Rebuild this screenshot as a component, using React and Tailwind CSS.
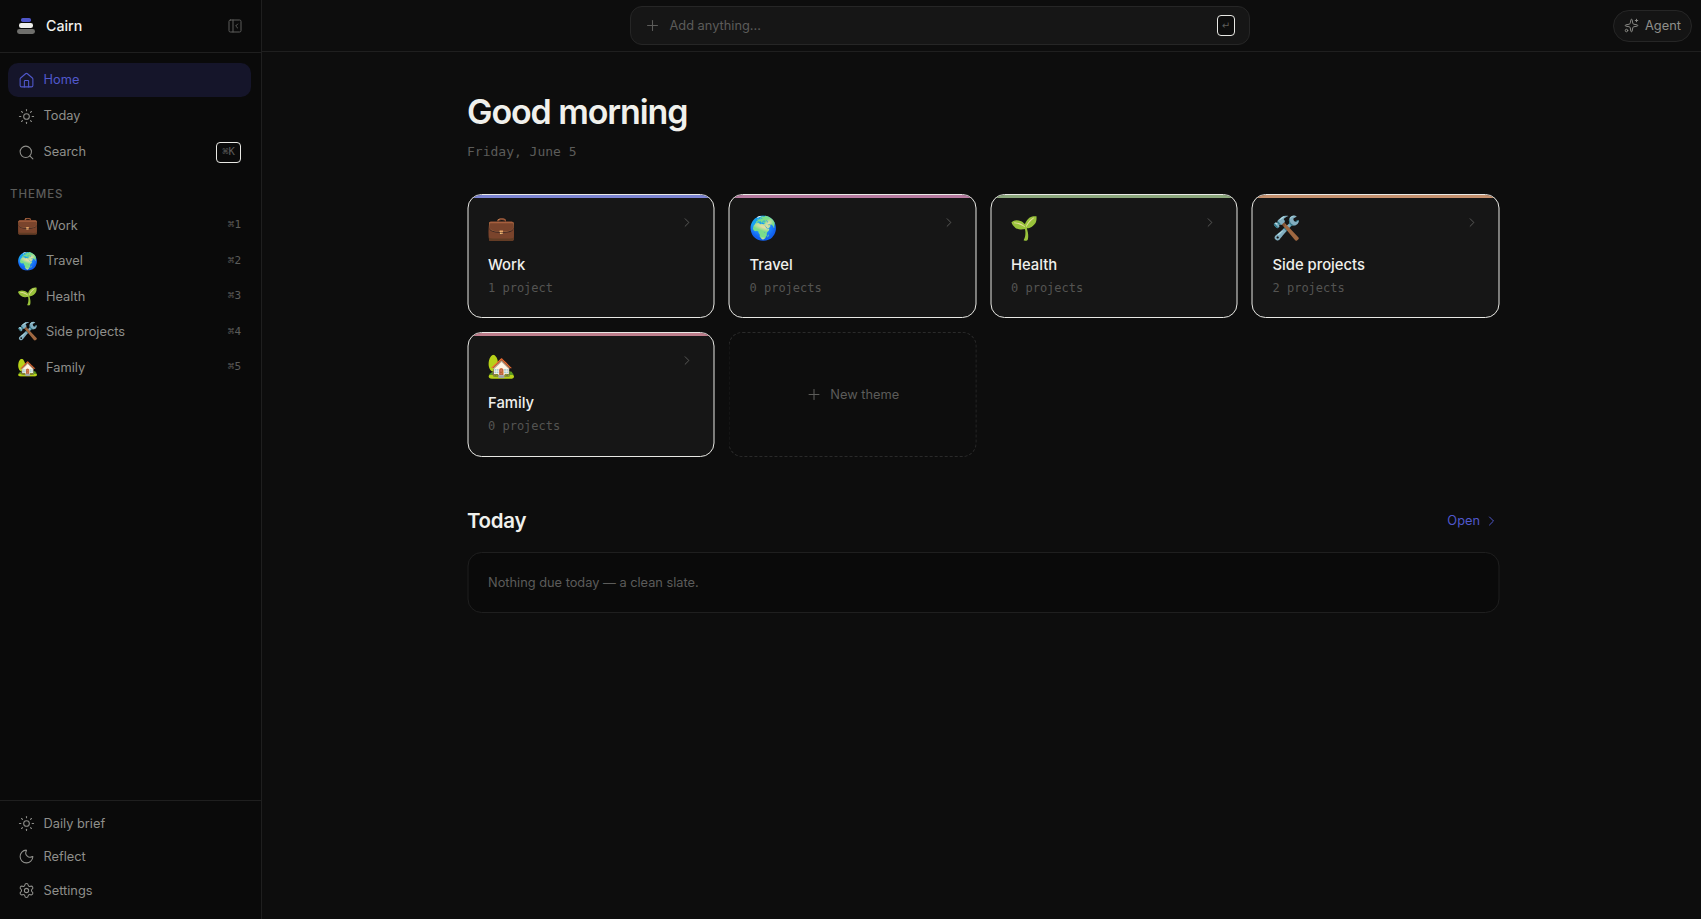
import React from 'react'
import {
  House,
  Sun,
  Search,
  PanelLeftClose,
  Moon,
  Settings,
  Plus,
  ChevronRight,
  Sparkles,
} from 'lucide-react'

const sans = { fontFamily: 'Inter, "Liberation Sans", sans-serif' }

const themes = [
  { name: 'Work', emoji: '💼', count: '1 project', key: '1', bar: 'bg-[#7b83d1]' },
  { name: 'Travel', emoji: '🌍', count: '0 projects', key: '2', bar: 'bg-[#b57a9f]' },
  { name: 'Health', emoji: '🌱', count: '0 projects', key: '3', bar: 'bg-[#8ba67c]' },
  { name: 'Side projects', emoji: '🛠️', count: '2 projects', key: '4', bar: 'bg-[#c4906e]' },
  { name: 'Family', emoji: '🏡', count: '0 projects', key: '5', bar: 'bg-[#bd7d8b]' },
]

function NavItem({ icon: Icon, label, active, right, className }) {
  return (
    <div
      className={`flex items-center rounded-[10px] pl-[9.5px] pr-[10px] text-[12.8px] ${
        active ? 'bg-[#15152a] text-[#5058cc]' : 'text-[#8f8f8b]'
      } ${className}`}
    >
      <Icon size={17} strokeWidth={1.5} className="mr-[9px]" />
      <span className="flex-1">{label}</span>
      {right}
    </div>
  )
}

function Logo() {
  return (
    <svg width="18" height="16" viewBox="0 0 18 16">
      <rect x="4" y="0" width="10" height="4" rx="1.8" fill="#4f56c9" />
      <rect x="2" y="5" width="14" height="5" rx="2.2" fill="#efefeb" />
      <rect x="0" y="11" width="18" height="5" rx="2.4" fill="#6f6f6c" />
    </svg>
  )
}

function ThemeCard({ theme }) {
  return (
    <div className="flex min-h-[124px] flex-col overflow-hidden rounded-[14px] border border-[#e8e8e4] bg-[#161616]">
      <div className={`h-[3px] ${theme.bar}`} />
      <div className="flex items-start justify-between pl-[20px] pr-[19px] pt-[15px]">
        <span className="ml-[-1px] text-[23px] leading-[30px]">{theme.emoji}</span>
        <ChevronRight size={15} strokeWidth={1.5} className="mt-[2px] text-[#5c5c5a]" />
      </div>
      <div className="mt-[11px] pl-[20px] text-[14.8px] font-medium leading-[22px] text-[#f0f0ec]">{theme.name}</div>
      <div className="mt-[3px] pl-[20px] font-['DejaVu_Sans_Mono',monospace] text-[12px] leading-[18px] text-[#545452]">
        {theme.count}
      </div>
    </div>
  )
}

export default function App() {
  return (
    <div style={sans} className="flex h-[919px] overflow-hidden bg-[#0d0d0d]">
      <aside className="flex w-[262px] shrink-0 flex-col border-r border-[#1f1f1f] bg-[#0a0a0a]">
        <div className="flex h-[53px] shrink-0 items-center border-b border-[#1f1f1f] pl-[17px] pr-[18px]">
          <Logo />
          <span className="ml-[11px] flex-1 text-[14.2px] font-medium text-[#f0f0ec]">Cairn</span>
          <PanelLeftClose size={16} strokeWidth={1.5} className="text-[#5c5c5a]" />
        </div>
        <nav className="flex flex-col pl-[8px] pr-[10px] pt-[10px]">
          <NavItem icon={House} label="Home" active className="h-[34px]" />
          <NavItem icon={Sun} label="Today" className="mt-[1px] h-[36px]" />
          <NavItem
            icon={Search}
            label="Search"
            className="h-[36px]"
            right={
              <kbd className="flex h-[21px] w-[25px] items-center justify-center rounded-[4px] border border-[#e8e8e4] font-['DejaVu_Sans_Mono',monospace] text-[10.5px] text-[#5c5c5a]">
                ⌘K
              </kbd>
            }
          />
        </nav>
        <div className="mt-[15px] pl-[10px] text-[11.5px] font-medium leading-[18px] tracking-[0.08em] text-[#5c5c5a]">
          THEMES
        </div>
        <div className="mt-[5px] flex flex-col pl-[8px] pr-[10px]">
          {themes.map((t) => (
            <div key={t.name} className="flex h-[35.4px] items-center pl-[9px] pr-[10px] text-[12.8px] text-[#8f8f8b]">
              <span className="w-[29px] text-[17px] leading-none">{t.emoji}</span>
              <span className="flex-1">{t.name}</span>
              <span className="font-['DejaVu_Sans_Mono',monospace] text-[11px] text-[#5c5c5a]">⌘{t.key}</span>
            </div>
          ))}
        </div>
        <div className="mt-auto flex h-[119px] flex-col border-t border-[#1f1f1f] pl-[8px] pr-[10px] pt-[6px]">
          <NavItem icon={Sun} label="Daily brief" className="h-[33px]" />
          <NavItem icon={Moon} label="Reflect" className="h-[33px]" />
          <NavItem icon={Settings} label="Settings" className="h-[35px]" />
        </div>
      </aside>
      <div className="flex min-w-0 flex-1 flex-col">
        <header className="flex h-[52px] shrink-0 items-center border-b border-[#1f1f1f] pr-[9px]">
          <div className="flex flex-1 justify-center pl-[5px]">
            <div className="flex h-[39px] w-[620px] items-center rounded-[12px] border border-[#262626] bg-[#161616] pl-[12.5px] pr-[14px]">
              <Plus size={17} strokeWidth={1.5} className="text-[#5c5c5a]" />
              <span className="ml-[9px] flex-1 text-[12.8px] text-[#5c5c5a]">Add anything...</span>
              <kbd className="flex h-[21px] w-[18px] items-center justify-center rounded-[4px] border border-[#e8e8e4] bg-[#0d0d0d] font-['DejaVu_Sans',sans-serif] text-[10px] text-[#5c5c5a]">
                ↵
              </kbd>
            </div>
          </div>
          <div className="flex h-[32px] w-[79px] items-center rounded-full border border-[#262626] bg-[#141414] pl-[10px] text-[12.8px] text-[#8f8f8b]">
            <Sparkles size={15} strokeWidth={1.5} className="mr-[6px]" />
            Agent
          </div>
        </header>
        <main className="mx-auto w-[1032px] translate-x-[1.5px] pt-[40px]">
          <h1 className="text-[34px] font-semibold leading-[40px] tracking-[-0.032em] text-[#f0f0ec]">Good morning</h1>
          <div className="mt-[10px] font-['DejaVu_Sans_Mono',monospace] text-[13px] leading-[20px] text-[#5c5c5a]">
            Friday, June 5
          </div>
          <div className="mt-[32px] grid grid-cols-4 gap-x-[14px] gap-y-[14px]">
            {themes.map((t) => (
              <ThemeCard key={t.name} theme={t} />
            ))}
            <div className="flex h-[125px] items-center justify-center rounded-[14px] border border-dashed border-[#2a2a2a] text-[12.8px] text-[#5c5c5a]">
              <Plus size={17} strokeWidth={1.5} className="mr-[8px]" />
              New theme
            </div>
          </div>
          <div className="mt-[49px] flex items-center justify-between">
            <h2 className="text-[20.5px] font-semibold leading-[30px] tracking-[-0.015em] text-[#f0f0ec]">Today</h2>
            <span className="flex items-center text-[12.8px] text-[#5058cc]">
              Open
              <ChevronRight size={16} strokeWidth={1.5} className="ml-[3px]" />
            </span>
          </div>
          <div className="mt-[16px] flex h-[61px] items-center rounded-[14px] border border-[#1f1f1f] bg-[#0a0a0a] pl-[20px] text-[12.8px] text-[#5c5c5a]">
            Nothing due today — a clean slate.
          </div>
        </main>
      </div>
    </div>
  )
}
